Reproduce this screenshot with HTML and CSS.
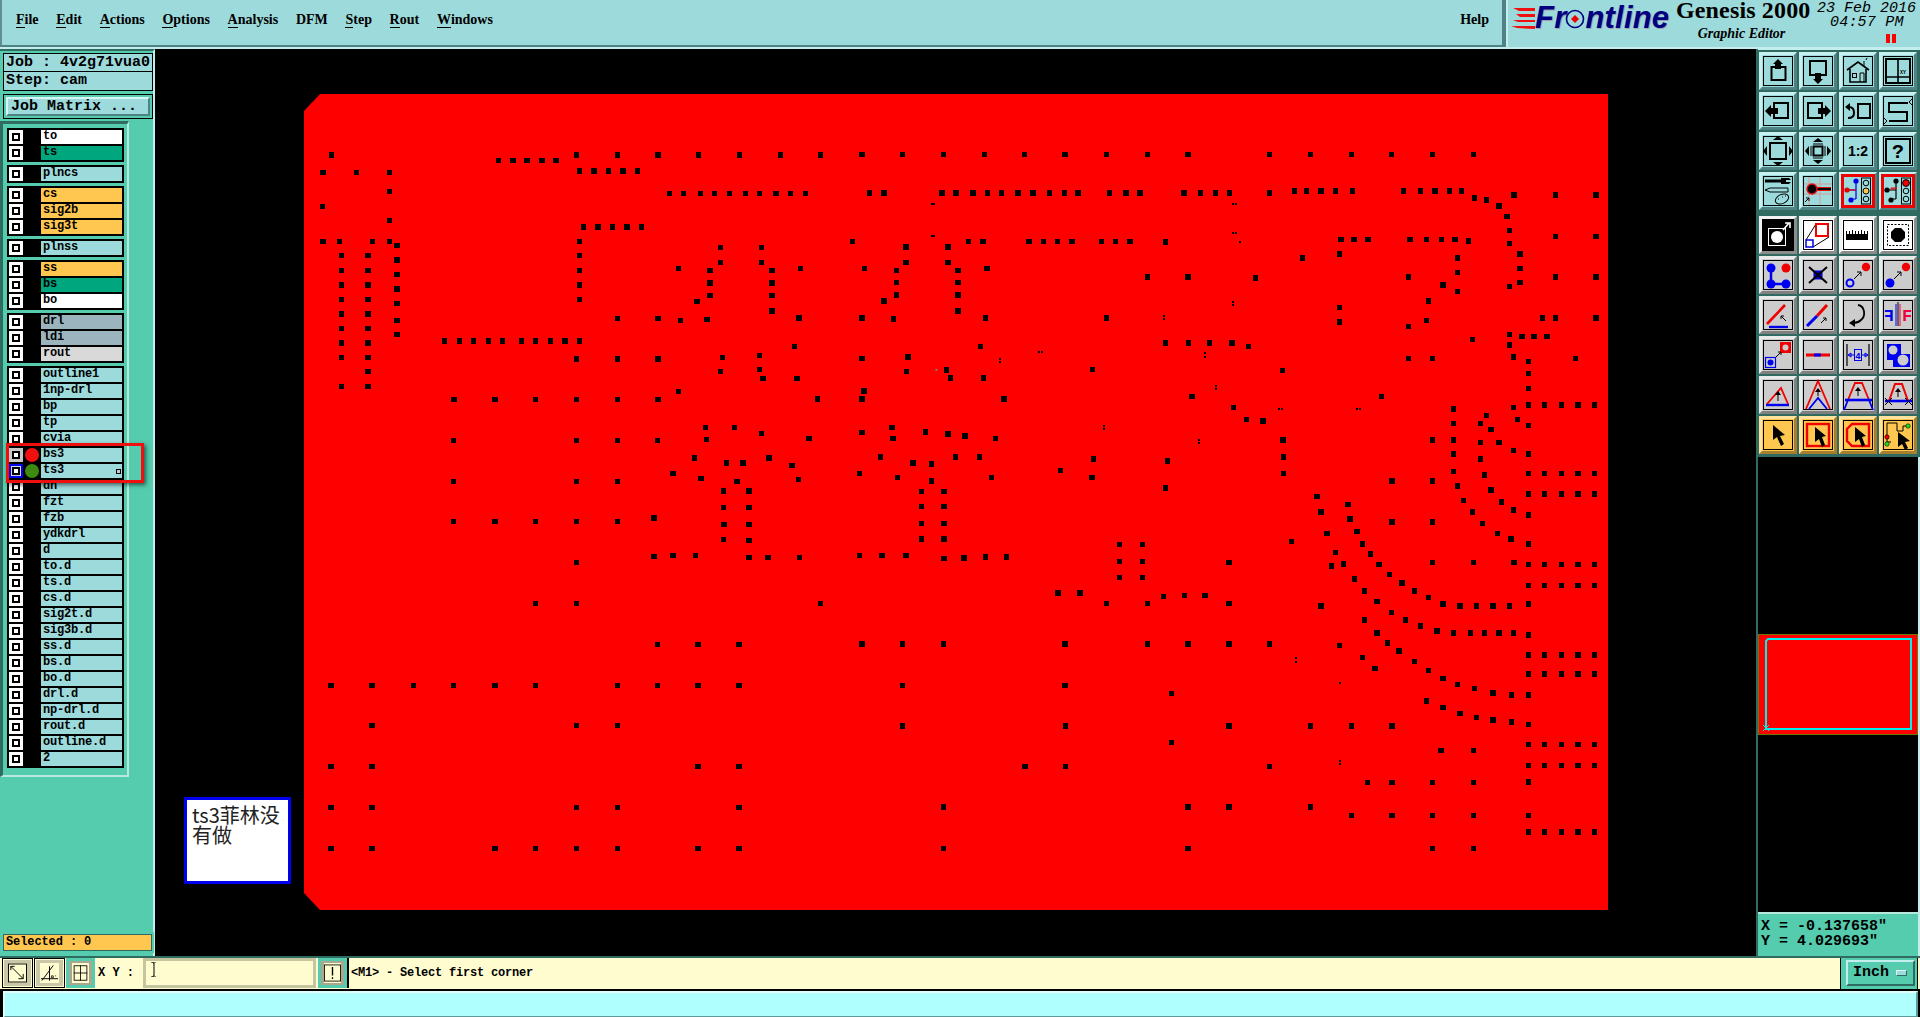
FILE: index.html
```html
<!DOCTYPE html>
<html lang="en">
<head>
<meta charset="utf-8">
<title>Genesis 2000 Graphic Editor</title>
<link rel="stylesheet" href="styles.css">
</head>
<body>
<header class="top">
  <nav class="menu">
    <span class="m"><u>F</u>ile</span><span class="m"><u>E</u>dit</span><span class="m"><u>A</u>ctions</span><span class="m"><u>O</u>ptions</span><span class="m"><u>A</u>nalysis</span><span class="m">DFM</span><span class="m"><u>S</u>tep</span><span class="m"><u>R</u>out</span><span class="m"><u>W</u>indows</span>
    <span class="m help">Help</span>
  </nav>
  <div class="brand">
    <div class="logo">
      <svg class="speed" viewBox="0 0 24 24" width="24" height="24"><path d="M2 2H24V5L8 5zM5 8H24V11L9 11zM2 14H24V16L7 16zM0 20H24V23L6 22z" fill="#f01010"/></svg>
      <span class="fl">Fr</span><svg class="oh" viewBox="0 0 20 20" width="20" height="22"><circle cx="10" cy="10" r="8.5" fill="none" stroke="#000080" stroke-width="1.6"/><path d="M10 6l4 4-4 4-4-4z" fill="#f00000"/></svg><span class="fl">ntline</span>
    </div>
    <div class="gen">
      <div class="gen-t">Genesis 2000</div>
      <div class="gen-s">Graphic Editor</div>
    </div>
    <div class="date">
      <div class="d1">23 Feb 2016</div>
      <div class="d2">04:57 PM</div>
      <div class="pause"><i></i><i></i></div>
    </div>
  </div>
</header>

<main class="mid">
  <aside class="left">
    <div class="job">
      <div class="jobline">Job : 4v2g71vua0</div>
      <div class="jobline">Step: cam</div>
    </div>
    <div class="matrix"><div class="matrix-b">Job Matrix ...</div></div>
    <div class="listwrap">
      <div class="list">
        <div class="grp">
          <div class="row"><i class="chk"></i><i class="sp"></i><span class="nm w">to</span></div>
          <div class="row"><i class="chk"></i><i class="sp"></i><span class="nm g">ts</span></div>
        </div>
        <div class="grp"><div class="row"><i class="chk"></i><i class="sp"></i><span class="nm">plncs</span></div></div>
        <div class="grp">
          <div class="row"><i class="chk"></i><i class="sp"></i><span class="nm o">cs</span></div>
          <div class="row"><i class="chk"></i><i class="sp"></i><span class="nm o">sig2b</span></div>
          <div class="row"><i class="chk"></i><i class="sp"></i><span class="nm o">sig3t</span></div>
        </div>
        <div class="grp"><div class="row"><i class="chk"></i><i class="sp"></i><span class="nm">plnss</span></div></div>
        <div class="grp">
          <div class="row"><i class="chk"></i><i class="sp"></i><span class="nm o">ss</span></div>
          <div class="row"><i class="chk"></i><i class="sp"></i><span class="nm g">bs</span></div>
          <div class="row"><i class="chk"></i><i class="sp"></i><span class="nm w">bo</span></div>
        </div>
        <div class="grp">
          <div class="row"><i class="chk"></i><i class="sp"></i><span class="nm b">drl</span></div>
          <div class="row"><i class="chk"></i><i class="sp"></i><span class="nm b">ldi</span></div>
          <div class="row"><i class="chk"></i><i class="sp"></i><span class="nm l">rout</span></div>
        </div>
        <div class="grp">
          <div class="row"><i class="chk"></i><i class="sp"></i><span class="nm">outline1</span></div>
          <div class="row"><i class="chk"></i><i class="sp"></i><span class="nm">1np-drl</span></div>
          <div class="row"><i class="chk"></i><i class="sp"></i><span class="nm">bp</span></div>
          <div class="row"><i class="chk"></i><i class="sp"></i><span class="nm">tp</span></div>
          <div class="row"><i class="chk"></i><i class="sp"></i><span class="nm">cvia</span></div>
          <div class="row"><i class="chk dim"></i><i class="sp"><b class="led red"></b></i><span class="nm">bs3</span></div>
          <div class="row"><i class="chk dim act"></i><i class="sp"><b class="led grn"></b></i><span class="nm">ts3<em class="mini"></em></span></div>
          <div class="row"><i class="chk"></i><i class="sp"></i><span class="nm">dh</span></div>
          <div class="row"><i class="chk"></i><i class="sp"></i><span class="nm">fzt</span></div>
          <div class="row"><i class="chk"></i><i class="sp"></i><span class="nm">fzb</span></div>
          <div class="row"><i class="chk"></i><i class="sp"></i><span class="nm">ydkdrl</span></div>
          <div class="row"><i class="chk"></i><i class="sp"></i><span class="nm">d</span></div>
          <div class="row"><i class="chk"></i><i class="sp"></i><span class="nm">to.d</span></div>
          <div class="row"><i class="chk"></i><i class="sp"></i><span class="nm">ts.d</span></div>
          <div class="row"><i class="chk"></i><i class="sp"></i><span class="nm">cs.d</span></div>
          <div class="row"><i class="chk"></i><i class="sp"></i><span class="nm">sig2t.d</span></div>
          <div class="row"><i class="chk"></i><i class="sp"></i><span class="nm">sig3b.d</span></div>
          <div class="row"><i class="chk"></i><i class="sp"></i><span class="nm">ss.d</span></div>
          <div class="row"><i class="chk"></i><i class="sp"></i><span class="nm">bs.d</span></div>
          <div class="row"><i class="chk"></i><i class="sp"></i><span class="nm">bo.d</span></div>
          <div class="row"><i class="chk"></i><i class="sp"></i><span class="nm">drl.d</span></div>
          <div class="row"><i class="chk"></i><i class="sp"></i><span class="nm">np-drl.d</span></div>
          <div class="row"><i class="chk"></i><i class="sp"></i><span class="nm">rout.d</span></div>
          <div class="row"><i class="chk"></i><i class="sp"></i><span class="nm">outline.d</span></div>
          <div class="row"><i class="chk"></i><i class="sp"></i><span class="nm">2</span></div>
        </div>
        <div class="callout"></div>
      </div>
    </div>
    <div class="selected"><div class="selected-in">Selected : 0</div></div>
  </aside>

  <section class="canvas">
    <svg class="board" viewBox="155 49 1602 907" width="1602" height="907">
      <path d="M320 94H1608V910H320L304 893V111Z" fill="#ff0000"/>
      <path class="dots" transform="matrix(.35714 0 0 .33333 290 80)" d="M116 225h0M802 225h0M917 225h0M1031 225h0M1144 225h0M1259 225h0M1373 225h0M1486 225h0M584 241h0M624 241h0M664 241h0M706 241h0M745 241h0M811 273h0M851 273h0M892 273h0M932 273h0M973 273h0M92 277h0M186 277h0M279 277h0M279 334h0M1063 341h0M1102 341h0M1149 341h0M1189 341h0M1231 341h0M1275 341h0M1315 341h0M1361 341h0M1401 341h0M1443 341h0M91 379h0M279 421h0M822 441h0M862 441h0M903 441h0M943 441h0M984 441h0M92 484h0M139 484h0M231 484h0M279 484h0M811 484h0M299 497h0M1205 502h0M1320 502h0M144 527h0M218 527h0M811 527h0M299 540h0M1205 547h0M1320 547h0M1088 566h0M1429 566h0M144 571h0M218 571h0M811 571h0M1176 571h0M1349 571h0M299 583h0M1176 609h0M1349 609h0M144 615h0M218 615h0M811 615h0M299 627h0M1176 646h0M1349 646h0M144 658h0M218 658h0M811 658h0M1140 664h0M299 671h0M1349 693h0M144 702h0M218 702h0M1425 714h0M917 715h0M1030 715h0M1168 718h0M299 721h0M1094 721h0M144 745h0M218 745h0M299 763h0M433 783h0M475 783h0M514 783h0M556 783h0M595 783h0M648 783h0M688 783h0M729 783h0M770 783h0M811 783h0M144 789h0M218 789h0M1413 799h0M1315 827h0M144 832h0M218 832h0M1211 832h0M802 837h0M917 837h0M1030 837h0M1315 869h0M218 875h0M1205 875h0M1325 895h0M1419 895h0M144 919h0M218 919h0M1088 934h0M1477 957h0M459 958h0M574 958h0M687 958h0M802 958h0M917 958h0M1030 958h0M1163 1043h0M1245 1043h0M1320 1061h0"/>
      <path class="dots" transform="matrix(.3954 0 0 .33333 290 430)" d="M414 31h0M724 31h0M828 31h0M930 31h0M1053 28h0M1313 25h0M1023 84h0M1211 84h0M1104 99h0M1146 99h0M1270 106h0M969 130h0M1040 145h0M1286 148h0M414 154h0M724 154h0M828 154h0M1130 154h0M1096 183h0M1161 183h0M1096 232h0M1161 233h0M921 264h0M414 275h0M518 275h0M621 275h0M724 275h0M828 275h0M1098 283h0M1161 283h0M1096 328h0M1161 332h0M969 376h0M1025 376h0M920 379h0M1161 382h0M1209 382h0M1288 382h0M724 397h0M621 520h0M724 520h0M1342 520h0M930 643h0M1032 643h0M1136 643h0M104 766h0M208 766h0M312 766h0M414 766h0M518 766h0M621 766h0M828 766h0M930 766h0M1032 766h0M1136 766h0M208 887h0M724 887h0M828 887h0M104 1009h0M208 1009h0M1032 1009h0M1136 1009h0M104 1132h0M208 1132h0M724 1132h0M828 1132h0M1136 1132h0M104 1255h0M208 1255h0M518 1255h0M621 1255h0M724 1255h0M828 1255h0M1032 1255h0M1136 1255h0"/>
      <path class="dots" transform="matrix(.4911 0 0 .5294 850 85)" d="M24 131h0M107 131h0M190 131h0M274 131h0M355 131h0M438 131h0M522 131h0M606 131h0M688 131h0M854 131h0M938 131h0M1021 131h0M1103 131h0M1186 131h0M1270 131h0M905 200h0M930 200h0M959 200h0M989 200h0M1023 200h0M1127 200h0M1162 200h0M1191 200h0M1221 200h0M1245 200h0M40 204h0M69 204h0M187 204h0M216 204h0M250 204h0M280 204h0M309 204h0M342 204h0M373 204h0M406 204h0M437 204h0M464 204h0M528 204h0M562 204h0M591 204h0M680 204h0M714 204h0M744 204h0M773 204h0M854 204h0M1352 208h0M1437 208h0M1519 208h0M1272 213h0M1296 217h0M1322 229h0M1338 248h0M1343 275h0M1343 299h0M5 296h0M241 296h0M271 296h0M364 296h0M394 296h0M423 296h0M452 296h0M512 296h0M541 296h0M570 296h0M642 297h0M1000 292h0M1026 292h0M1055 292h0M1140 292h0M1174 292h0M1204 292h0M1232 292h0M1259 295h0M1437 286h0M1519 286h0M114 306h0M200 306h0M997 319h0M1364 319h0M921 327h0M1237 327h0M114 335h0M200 335h0M30 347h0M279 347h0M1364 347h0M95 350h0M220 350h0M1237 354h0M606 363h0M688 363h0M826 365h0M1137 363h0M1437 363h0M1519 363h0M95 373h0M220 373h0M1364 373h0M1208 378h0M1343 381h0M1237 390h0M95 397h0M220 397h0M69 408h0M1178 408h0M997 420h0M220 427h0M24 440h0M89 442h0M276 440h0M522 440h0M1437 440h0M1410 440h0M1519 440h0M1174 445h0M997 448h0M1137 456h0M1343 471h0M1368 475h0M1393 475h0M1419 475h0M1268 481h0M642 487h0M689 487h0M732 487h0M778 487h0M1343 491h0M266 494h0M811 494h0M118 514h0M1351 514h0M24 517h0M1137 517h0M1186 517h0M1477 517h0M1382 522h0M494 537h0M881 539h0M196 538h0M115 541h0M1382 545h0M205 553h0M272 553h0M1382 573h0M29 578h0M696 588h0M1082 588h0M24 593h0M314 593h0M1382 604h0M1414 604h0M1449 604h0M1482 604h0M1516 604h0M781 609h0M1351 609h0M1229 612h0M1296 624h0M807 632h0M1359 632h0M841 635h0M1229 639h0M1284 639h0M1382 643h0M86 647h0M1305 651h0M154 655h0M24 656h0M200 659h0M234 663h0M88 668h0M296 668h0M882 671h0M1186 671h0M1229 671h0M1284 675h0M1322 675h0M1351 690h0M1229 697h0M1382 697h0M62 703h0M215 703h0M264 703h0M883 703h0M496 706h0M1284 706h0M646 710h0M128 714h0M166 716h0M429 728h0M1229 730h0M19 734h0M883 734h0M1382 734h0M1414 734h0M1449 734h0M1482 734h0M1516 734h0M1292 737h0M97 741h0M288 741h0M493 741h0M166 748h0M1104 748h0M1186 748h0M1237 757h0M642 761h0M1305 765h0M146 768h0M191 768h0M1382 773h0M1414 773h0M1449 773h0M1482 773h0M1516 773h0M951 777h0M1249 785h0M1327 788h0M1014 792h0M146 796h0M191 796h0M1351 803h0M959 807h0M1268 807h0M1382 812h0M1018 820h0M1104 825h0M1186 825h0M146 828h0M191 828h0M1288 828h0M1032 843h0M971 847h0M1318 847h0M146 858h0M191 858h0M1346 858h0M899 862h0M1044 867h0M1382 867h0M549 868h0M596 868h0M989 883h0M1060 886h0M19 889h0M65 889h0M114 889h0M232 893h0M276 892h0M319 892h0M191 894h0M549 900h0M596 900h0M772 902h0M1186 902h0M1270 902h0M1352 902h0M1005 905h0M1077 906h0M1382 906h0M1414 906h0M1449 906h0M1482 906h0M1516 906h0M980 909h0M1099 925h0M549 930h0M596 930h0M1027 933h0M1124 941h0M1382 945h0M1414 945h0M1449 945h0M1482 945h0M1516 945h0M1048 956h0M1149 956h0M424 960h0M468 960h0M681 964h0M723 964h0M638 966h0M1178 968h0M1073 976h0M522 979h0M606 979h0M772 979h0M1208 980h0M1382 980h0M959 984h0M1242 984h0M1276 984h0M1309 984h0M1343 984h0M1103 996h0M1048 1011h0M1131 1011h0M1162 1022h0M1195 1031h0M1073 1035h0M1229 1035h0M1263 1035h0M1292 1035h0M1322 1035h0M1351 1035h0M1382 1039h0M1094 1054h0M24 1056h0M107 1056h0M190 1056h0M438 1056h0M606 1056h0M688 1056h0M772 1056h0M854 1056h0M997 1059h0M1118 1069h0M1382 1077h0M1414 1077h0M1449 1077h0M1482 1077h0M1516 1077h0M1044 1081h0M1149 1089h0M1069 1102h0M1178 1106h0M1382 1113h0M1414 1113h0M1449 1113h0M1482 1113h0M1516 1113h0M1208 1121h0M1237 1132h0M107 1134h0M438 1134h0M1272 1140h0M1309 1148h0M655 1149h0M1347 1152h0M1382 1152h0M1174 1164h0M1208 1176h0M1242 1187h0M1276 1195h0M1309 1199h0M1347 1203h0M1382 1208h0M107 1211h0M439 1211h0M772 1211h0M938 1211h0M1021 1211h0M1104 1211h0M655 1242h0M1382 1246h0M1414 1246h0M1449 1246h0M1482 1246h0M1516 1246h0M1203 1257h0M1270 1257h0M1382 1285h0M1414 1285h0M1449 1285h0M1482 1285h0M1516 1285h0M356 1287h0M439 1287h0M854 1287h0M1382 1317h0M1054 1318h0M1104 1318h0M1186 1318h0M1270 1318h0M190 1364h0M688 1364h0M772 1364h0M938 1364h0M1021 1380h0M1104 1380h0M1186 1380h0M1270 1380h0M1382 1380h0M1382 1411h0M1414 1411h0M1449 1411h0M1482 1411h0M1516 1411h0M190 1442h0M688 1442h0M1186 1442h0M1270 1442h0"/>
      <path class="dots sm" transform="matrix(.4911 0 0 .5294 850 85)" d="M166 224h0M172 224h0M780 224h0M786 224h0M166 285h0M172 285h0M780 280h0M786 280h0M795 297h0M780 409h0M780 415h0M640 436h0M640 442h0M385 505h0M391 505h0M723 507h0M723 513h0M305 518h0M305 524h0M745 569h0M745 574h0M873 612h0M879 612h0M1032 612h0M1038 612h0M517 644h0M517 650h0M710 671h0M710 677h0M908 1083h0M908 1089h0M998 1130h0M997 1276h0M997 1282h0"/>
      <path d="M174 538h4" stroke="#30e0c0" stroke-width="1" transform="matrix(.4911 0 0 .5294 850 85)" vector-effect="non-scaling-stroke"/>
    </svg>
    <div class="note">ts3菲林没有做</div>
  </section>

  <aside class="right">
    <div class="tools">
      <div class="btn te"><svg class="ic" viewBox="0 0 32 32"><rect class="fr" x="1.5" y="1.5" width="29" height="29"/><rect x="9.5" y="12" width="14" height="13"/><path class="f" d="M16 4l5 5h-2v5h-6V9h-2z"/></svg></div>
      <div class="btn te"><svg class="ic" viewBox="0 0 32 32"><rect class="fr" x="1.5" y="1.5" width="29" height="29"/><rect x="8" y="6" width="16" height="14"/><path class="f" d="M16 29l-5-5h2v-6h6v6h2z"/></svg></div>
      <div class="btn te"><svg class="ic" viewBox="0 0 32 32"><rect class="fr" x="1.5" y="1.5" width="29" height="29"/><path d="M5 15L16 7L27 15M8 14V27H24V14" stroke-width="1.6"/><path d="M22 11V6M24 5l1-2" stroke-width="1"/><rect x="10.5" y="18.5" width="4" height="4" stroke-width="1"/><path d="M18 27V18H22V27" stroke-width="1"/></svg></div>
      <div class="btn te"><svg class="ic" viewBox="0 0 32 32"><rect class="fr" x="1.5" y="1.5" width="29" height="29"/><rect x="4" y="4" width="24" height="24"/><path d="M16 4V28M4 22H28" stroke-width="1.6"/><text class="t5" x="18" y="19">XY</text></svg></div>

      <div class="btn te"><svg class="ic" viewBox="0 0 32 32"><rect class="fr" x="1.5" y="1.5" width="29" height="29"/><rect x="12" y="8" width="14" height="15"/><path class="f" d="M3 16l6-6v3h7v6H9v3z"/></svg></div>
      <div class="btn te"><svg class="ic" viewBox="0 0 32 32"><rect class="fr" x="1.5" y="1.5" width="29" height="29"/><rect x="6" y="8" width="14" height="15"/><path class="f" d="M29 16l-6-6v3h-7v6h7v3z"/></svg></div>
      <div class="btn te"><svg class="ic" viewBox="0 0 32 32"><rect class="fr" x="1.5" y="1.5" width="29" height="29"/><rect x="16" y="9" width="12" height="14"/><path d="M7 12c4 0 5 3 5 6s-2 5-6 5"/><path class="f" d="M3 12l5-4v8z"/></svg></div>
      <div class="btn te"><svg class="ic" viewBox="0 0 32 32"><rect class="fr" x="1.5" y="1.5" width="29" height="29"/><path d="M26 8H7V17H25V26H7"/><path d="M30 4l-3 3 3 3M2 23l3 3-3 3" stroke-width="1"/></svg></div>

      <div class="btn te"><svg class="ic" viewBox="0 0 32 32"><rect class="fr" x="1.5" y="1.5" width="29" height="29"/><rect x="8" y="8" width="16" height="16"/><path class="f" d="M16 1l5 4H11zM16 31l5-4H11zM1 16l4-5v10zM31 16l-4-5v10z"/></svg></div>
      <div class="btn te"><svg class="ic" viewBox="0 0 32 32"><rect class="fr" x="1.5" y="1.5" width="29" height="29"/><rect x="11.5" y="11.5" width="9" height="9"/><path class="f" d="M16 3l5 4H11zM16 29l5-4H11zM3 16l4-5v10zM29 16l-4-5v10z"/><path d="M11 9H21M11 23H21M9 11V21M23 11V21" stroke-width="1"/></svg></div>
      <div class="btn te"><svg class="ic" viewBox="0 0 32 32"><rect class="fr" x="1.5" y="1.5" width="29" height="29"/><text class="tb" x="16" y="21">1:2</text></svg></div>
      <div class="btn te"><svg class="ic" viewBox="0 0 32 32"><rect class="fr" x="1.5" y="1.5" width="29" height="29"/><rect x="4" y="4" width="24" height="24"/><text class="tq" x="16" y="23">?</text></svg></div>

      <div class="btn te"><svg class="ic" viewBox="0 0 32 32"><rect class="fr" x="1.5" y="1.5" width="29" height="29"/><path d="M3 6H20" stroke-width="3"/><path class="f" d="M19 3h8l2 2h-5v2h5l-2 2h-8z"/><path d="M3 15L8 13H26V17H8Z" stroke-width="1"/><ellipse cx="20" cy="24" rx="7" ry="4.5" transform="rotate(-25 20 24)" stroke-width="1"/><path d="M16 24h1M20 22h1M23 21h1" stroke-width="1"/></svg></div>
      <div class="btn te"><svg class="ic" viewBox="0 0 32 32"><rect class="fr" x="1.5" y="1.5" width="29" height="29"/><path d="M7 2V30M18 2V30M2 9H30M2 19H30" stroke="#d89a9a" stroke-width="1"/><path d="M12 14H29" stroke="#e01010" stroke-width="4"/><path d="M12 14H29" stroke-width="2"/><circle cx="10" cy="14" r="5" fill="#000" stroke="#e01010" stroke-width="1.5"/><path d="M3 27l4-4M4 23h3v3" stroke-width="1"/></svg></div>
      <div class="btn te"><svg class="ic" viewBox="0 0 32 32"><rect x="0.5" y="0.5" width="31" height="31" stroke="#f00000" stroke-width="3"/><rect x="19.5" y="3" width="9" height="26" stroke-width="1"/><circle cx="24" cy="8" r="2.8" stroke-width="1"/><circle cx="24" cy="16" r="3" fill="#ffc74f" stroke-width="1"/><circle cx="24" cy="24" r="2.8" stroke-width="1"/><path d="M14 6V24M5 15H14M14 24H9" stroke="#0000e0" stroke-width="1.2"/><path d="M5 15H14" stroke="#e00000" stroke-width="1.2"/><circle cx="14" cy="6" r="2.6" fill="#0000e0" stroke="none"/><circle cx="5" cy="15" r="2.6" fill="#e00000" stroke="none"/><circle cx="9" cy="25" r="2.6" fill="#0000e0" stroke="none"/></svg></div>
      <div class="btn te"><svg class="ic" viewBox="0 0 32 32"><rect x="0.5" y="0.5" width="31" height="31" stroke="#f00000" stroke-width="3"/><rect x="19.5" y="3" width="9" height="26" stroke-width="1"/><circle cx="24" cy="8" r="3.4" fill="#f00000" stroke-width="1"/><circle cx="24" cy="16" r="2.8" stroke-width="1"/><circle cx="24" cy="24" r="2.8" stroke-width="1"/><path d="M14 6V24M5 15H14M14 24H9" stroke-width="1.2"/><path d="M8 14H14M10 12v2M12 12v2M14 12v2" stroke="#e00000" stroke-width="1"/><circle cx="14" cy="6" r="2.6" fill="#000" stroke="none"/><circle cx="5" cy="15" r="2.6" fill="#000" stroke="none"/><circle cx="9" cy="25" r="2.6" fill="#000" stroke="none"/></svg></div>

      <div class="sep"></div>

      <div class="btn wh"><svg class="ic" viewBox="0 0 32 32"><rect x="1" y="1" width="30" height="30" fill="#000" stroke="#000"/><rect x="6.5" y="9.5" width="17" height="17" stroke="#fff" stroke-width="1"/><circle cx="15" cy="18" r="6" fill="#fff" stroke="none"/><path d="M21 11L27 4M23 4h5v5" stroke="#fff" stroke-width="1.6"/></svg></div>
      <div class="btn wh"><svg class="ic" viewBox="0 0 32 32"><rect class="fr" x="1.5" y="1.5" width="29" height="29"/><path d="M4 21L14 5M11 28L27 18" stroke-width="1"/><rect x="14" y="5" width="12" height="12" stroke="#f00000"/><rect x="4" y="21" width="7" height="7" stroke="#0000e0" stroke-width="1.5"/></svg></div>
      <div class="btn wh"><svg class="ic" viewBox="0 0 32 32"><rect class="fr" x="1.5" y="1.5" width="29" height="29"/><path class="f" d="M4 12h1v3h2v-3h1v3h2v-4h1v4h2v-3h1v3h2v-3h1v3h2v-4h1v4h2v-3h1v3h2v-3h1v9H4z"/></svg></div>
      <div class="btn wh"><svg class="ic" viewBox="0 0 32 32"><rect class="fr" x="1.5" y="1.5" width="29" height="29"/><rect x="5.5" y="5.5" width="21" height="21" stroke-width="1" stroke-dasharray="2 1.5"/><path class="f" d="M13 9h6l4 4v6l-4 4h-6l-4-4v-6z"/></svg></div>

      <div class="btn gr"><svg class="ic" viewBox="0 0 32 32"><rect class="fr" x="1.5" y="1.5" width="29" height="29"/><path d="M9 9V25H24" stroke="#0000f0" stroke-width="2.5"/><circle cx="9" cy="9" r="4.5" fill="#0000f0" stroke="none"/><circle cx="9" cy="25" r="4.5" fill="#0000f0" stroke="none"/><circle cx="24" cy="25" r="4.5" fill="#0000f0" stroke="none"/><circle cx="24" cy="9" r="4.5" fill="#f00000" stroke="none"/></svg></div>
      <div class="btn gr"><svg class="ic" viewBox="0 0 32 32"><rect class="fr" x="1.5" y="1.5" width="29" height="29"/><rect x="11.5" y="11.5" width="9" height="9" fill="#0000d0" stroke="none"/><path d="M7 8L25 24M25 8L7 24"/></svg></div>
      <div class="btn gr"><svg class="ic" viewBox="0 0 32 32"><rect class="fr" x="1.5" y="1.5" width="29" height="29"/><circle cx="8" cy="24" r="3.5" stroke="#0000f0"/><circle cx="24" cy="8" r="4.2" fill="#f00000" stroke="none"/><path d="M12 20L19 13M15 13h4v4" stroke-width="1"/></svg></div>
      <div class="btn gr"><svg class="ic" viewBox="0 0 32 32"><rect class="fr" x="1.5" y="1.5" width="29" height="29"/><circle cx="8" cy="24" r="4.5" fill="#0000f0" stroke="none"/><circle cx="24" cy="8" r="4.2" fill="#f00000" stroke="none"/><path d="M12 20L19 13M15 13h4v4" stroke-width="1"/></svg></div>

      <div class="btn gr"><svg class="ic" viewBox="0 0 32 32"><rect class="fr" x="1.5" y="1.5" width="29" height="29"/><path d="M5 25L23 6" stroke="#f00000" stroke-width="2.6"/><path d="M7 28H26" stroke="#0000f0" stroke-width="2.4"/><path d="M19 17l5 5M19 20v-3h3" stroke-width="1"/></svg></div>
      <div class="btn gr"><svg class="ic" viewBox="0 0 32 32"><rect class="fr" x="1.5" y="1.5" width="29" height="29"/><path d="M15 17L25 6" stroke="#f00000" stroke-width="3"/><path d="M5 27L15 17" stroke="#0000f0" stroke-width="3"/><path d="M19 24l5-5M21 19h3v3" stroke-width="1"/></svg></div>
      <div class="btn gr"><svg class="ic" viewBox="0 0 32 32"><rect class="fr" x="1.5" y="1.5" width="29" height="29"/><path d="M16 6c7 1 8 11 3 15-2 2-4 3-8 3" stroke-width="1.8"/><path class="f" d="M7 24l6-4v8z"/></svg></div>
      <div class="btn gr"><svg class="ic" viewBox="0 0 32 32"><rect class="fr" x="1.5" y="1.5" width="29" height="29"/><path d="M16 3V27" stroke-width="1"/><path d="M14 5V27" stroke="#0000f0" stroke-width="1"/><path d="M18 5V27" stroke="#f00040" stroke-width="1"/><text class="tfr" x="20" y="22">F</text><text class="tfb" x="-12" y="22" transform="scale(-1 1)">F</text></svg></div>

      <div class="btn gr"><svg class="ic" viewBox="0 0 32 32"><rect class="fr" x="1.5" y="1.5" width="29" height="29"/><rect x="18" y="3" width="11" height="11" fill="#f00000" stroke="none"/><circle cx="23.5" cy="8.5" r="3" fill="#ccc" stroke="none"/><rect x="3.5" y="18.5" width="10" height="10" stroke="#0000f0" stroke-width="1.2"/><circle cx="8.5" cy="23.5" r="3" fill="#0000f0" stroke="none"/><path d="M14 18L19 13M16 13h3v3" stroke-width="1"/></svg></div>
      <div class="btn gr"><svg class="ic" viewBox="0 0 32 32"><rect class="fr" x="1.5" y="1.5" width="29" height="29"/><path d="M4 16H28" stroke="#f00000" stroke-width="3"/><path d="M12 16H19" stroke="#0000f0" stroke-width="3"/></svg></div>
      <div class="btn gr"><svg class="ic" viewBox="0 0 32 32"><rect class="fr" x="1.5" y="1.5" width="29" height="29"/><path d="M5 5V27M27 5V27" stroke-width="1.2"/><path d="M6 16H26M6 16l3-2v4zM26 16l-3-2v4z" stroke="#0000f0" stroke-width="1"/><rect x="12.5" y="10.5" width="7" height="11" fill="#ccc" stroke="#0000f0" stroke-width="1"/><text class="t4" x="16" y="19.5">4</text></svg></div>
      <div class="btn gr"><svg class="ic" viewBox="0 0 32 32"><rect class="fr" x="1.5" y="1.5" width="29" height="29"/><path d="M5 5H19V15H28V28H11V21H5Z" fill="#0000f0" stroke="none"/><circle cx="11" cy="11" r="4.5" fill="#ccc" stroke="none"/><circle cx="21" cy="21" r="5.5" fill="#ccc" stroke="none"/></svg></div>

      <div class="btn gr"><svg class="ic" viewBox="0 0 32 32"><rect class="fr" x="1.5" y="1.5" width="29" height="29"/><path d="M5 25L19 9L26 25" stroke="#f00000" stroke-width="1.8"/><path d="M4 26H27" stroke="#0000f0" stroke-width="2.4"/><path d="M16 22V14" stroke-width="1"/><path class="f" d="M16 12l3 4h-6z"/></svg></div>
      <div class="btn gr"><svg class="ic" viewBox="0 0 32 32"><rect class="fr" x="1.5" y="1.5" width="29" height="29"/><path d="M4 30L16 2L28 30" stroke="#f00000" stroke-width="1.8"/><path d="M7 30L16 19L25 30" stroke="#0000f0" stroke-width="1.8"/><path d="M16 17V11" stroke-width="1"/><path class="f" d="M16 9l3 4h-6z"/></svg></div>
      <div class="btn gr"><svg class="ic" viewBox="0 0 32 32"><rect class="fr" x="1.5" y="1.5" width="29" height="29"/><path d="M6 21L13 4H20L27 21" stroke="#f00000" stroke-width="1.8"/><path d="M3 21H30" stroke="#0000f0" stroke-width="2.6"/><path d="M6 21L2 31M27 21L31 31" stroke="#0000f0" stroke-width="1.8"/><path d="M16 17V11" stroke-width="1"/><path class="f" d="M16 8l3 4h-6z"/></svg></div>
      <div class="btn gr"><svg class="ic" viewBox="0 0 32 32"><rect class="fr" x="1.5" y="1.5" width="29" height="29"/><path d="M7 22L13 5H20L26 22" stroke="#f00000" stroke-width="2"/><path d="M3 22H30" stroke="#0000f0" stroke-width="2.6"/><path d="M3 19l7 7M10 19l-7 7M23 19l7 7M30 19l-7 7" stroke-width="1"/><path d="M16 18V12" stroke-width="1"/><path class="f" d="M16 9l3 4h-6z"/></svg></div>

      <div class="btn or"><svg class="ic" viewBox="0 0 32 32"><rect class="fr" x="1.5" y="1.5" width="29" height="29"/><path class="f" d="M11 6V21L15 18L19 27L22 25L18 17L23 16Z"/></svg></div>
      <div class="btn or"><svg class="ic" viewBox="0 0 32 32"><rect class="fr" x="1.5" y="1.5" width="29" height="29"/><rect x="5" y="5" width="22" height="22" stroke="#f00000" stroke-width="2.4"/><path class="f" d="M13 8V23L17 20L20 28L23 26L20 18L24 17Z"/></svg></div>
      <div class="btn or"><svg class="ic" viewBox="0 0 32 32"><rect class="fr" x="1.5" y="1.5" width="29" height="29"/><path d="M10 5H27V27H10L5 22V10Z" stroke="#f00000" stroke-width="2.4"/><path class="f" d="M13 8V23L17 20L20 28L23 26L20 18L24 17Z"/></svg></div>
      <div class="btn or"><svg class="ic" viewBox="0 0 32 32"><rect class="fr" x="1.5" y="1.5" width="29" height="29"/><path d="M5 18V4H15V12H21V7H26M5 18V23H9" stroke-width="1"/><circle cx="5" cy="18" r="2.2" fill="#f00000" stroke-width=".6"/><circle cx="5" cy="25" r="2.2" fill="#20e020" stroke-width=".6"/><circle cx="26" cy="7" r="2.2" fill="#20e020" stroke-width=".6"/><path class="f" d="M16 13V28L20 25L23 31L26 29L23 23L28 22Z"/></svg></div>
    </div>
    <div class="viewer">
      <div class="over">
        <svg viewBox="0 0 160 101" width="160" height="101"><path d="M10 5H153V95H8V7Z" fill="none" stroke="#00eeee" stroke-width="2"/><path d="M5 91l6 6M11 91l-6 6" stroke="#00eeee" stroke-width="1"/></svg>
      </div>
    </div>
    <div class="coords">X = -0.137658"<br>Y = 4.029693"</div>
  </aside>
</main>

<div class="cmd">
  <div class="cbtn"><svg class="cic" viewBox="0 0 20 20"><rect x=".5" y=".5" width="19" height="19"/><path d="M3 3L16 16M11 16h5v-5M3 7V3h4"/></svg></div>
  <div class="cbtn"><svg class="cic" viewBox="0 0 20 20"><rect x=".5" y=".5" width="19" height="19" stroke="none"/><path d="M2 18L14 2M1 16H19M10 3V18"/><path d="M12 13h2v2h-2zM16 13h1" stroke-width=".8"/></svg></div>
  <div class="cbtn act"><svg class="cic" viewBox="0 0 20 20"><rect x="2.5" y="1.5" width="15" height="17"/><path d="M10 1V19M2 10H18"/></svg></div>
  <div class="xy">X Y :</div>
  <div class="inp"><svg class="beam" viewBox="0 0 7 15" width="7" height="15"><path d="M1 0h2v1h1v13h-1v1H1M6 0H4M6 15H4" fill="none" stroke="#000" stroke-width="1"/></svg></div>
  <div class="cbtn act wide"><svg class="cic" viewBox="0 0 20 20"><rect x=".5" y=".5" width="19" height="19"/><path d="M10 3V13M10 15V17" stroke-width="1.6"/></svg></div>
  <div class="msg">&lt;M1&gt; - Select first corner</div>
  <div class="unit"><div class="unit-b">Inch<i class="dash"></i></div></div>
</div>
<div class="status"></div>
</body>
</html>
```

FILE: styles.css
```css
* { box-sizing: border-box; }
html, body { margin: 0; height: 100%; overflow: hidden; }
body {
  width: 1920px; height: 1017px; background: #000;
  display: grid; grid-template-rows: 49px 907px 33px 28px;
  font-family: "Liberation Mono", monospace; font-weight: 700; color: #000;
}

/* top bar */
.top { display: flex; background: #c4eeee; padding-bottom: 2px; }
.menu {
  width: 1506px; height: 47px; background: #9cdadb; display: flex; align-items: center; gap: 17.7px;
  padding: 0 13px 6px 14px; border-left: 2px solid #5f8f8f; border-right: 4px solid #4f8285; border-bottom: 2px solid #4f8285;
  font: 700 14px/18px "Liberation Serif", serif;
}
.m u { text-decoration: none; border-bottom: 1px solid #000; display: inline-block; line-height: 15px; height: 16px; }
.help { margin-left: auto; }
.brand { flex: 1; margin-left: 2px; background: #9cdadb; position: relative; display: flex; height: 47px; overflow: hidden; }
.logo { position: absolute; left: 3px; top: 3px; display: flex; align-items: center; height: 30px; color: #000080; }
.speed { margin-right: 0; }
.fl { font: italic 700 31px/30px "Liberation Sans", sans-serif; text-shadow: 1px 1px 0 #a0a0b0; letter-spacing: .2px; }
.oh { margin: 2px 0 0 -1px; }
.gen { position: absolute; left: 168px; top: -3px; text-align: center; width: 134px; }
.gen-t { font: 700 24px/27px "Liberation Serif", serif; white-space: nowrap; letter-spacing: .15px; }
.gen-s { font: italic 700 14px/18px "Liberation Serif", serif; margin-top: 1px; margin-right: 3px; }
.date { position: absolute; left: 309px; top: 0; width: 100px; font-style: italic; font-weight: 400; font-size: 15px; line-height: 17px; }
.d1 { white-space: pre; }
.d2 { margin-left: 13px; margin-top: -3px; white-space: pre; letter-spacing: .2px; }
.pause { display: flex; gap: 2px; margin: 3px 0 0 69px; }
.pause i { width: 4px; height: 9px; background: #f00; }

/* middle */
.mid { display: flex; min-height: 0; }
.left { width: 155px; background: #54ccad; display: flex; flex-direction: column; border-right: 2px solid #c4eeee; border-top: 2px solid #2f6b60; padding-top: 2px; }
.job { margin: 0 0 0 3px; width: 150px; }
.jobline { height: 19px; border: 1px solid #000; background: #9cdadb; font-size: 15px; line-height: 17px; padding-left: 2px; white-space: pre; margin-bottom: -1px; }
.jobline + .jobline { height: 20px; margin-bottom: 0; }
.matrix { margin: 3px 0 0 3px; width: 150px; height: 25px; border: 1px solid #000; padding: 2px; }
.matrix-b { height: 19px; background: #9cdadb; font-size: 15px; line-height: 15px; padding-left: 3px; border: 2px solid; border-color: #d8f5f5 #4f8285 #4f8285 #d8f5f5; white-space: pre; }
.listwrap { margin-top: 2px; height: 656px; width: 129px; background: #54ccad; border-top: 3px solid #2f6b60; border-left: 3px solid #2f6b60; border-right: 2px solid #b8e8dc; border-bottom: 2px solid #b8e8dc; padding: 4px 0 0 4px; }
.list { display: flex; flex-direction: column; gap: 3px; position: relative; width: 117px; }
.grp { background: #000; padding: 2px 2px 0; width: 117px; }
.row { display: flex; height: 14px; margin-bottom: 2px; }
.chk { width: 14px; height: 14px; background: #fff; padding: 3px; flex: none; display: block; }
.chk::before { content: ""; display: block; box-sizing: border-box; width: 8px; height: 8px; border: 2px solid #000; background: #fff; }
.chk.dim { background: #c8c8c8; }
.chk.act { background: #d8d8d8; outline: 2px solid #0000f0; outline-offset: -2px; }
.sp { width: 18px; display: flex; justify-content: center; align-items: center; flex: none; }
.led { width: 14px; height: 14px; border-radius: 50%; display: block; }
.red { background: #f01010; }
.grn { background: #3c8a10; }
.nm { flex: 1; background: #9cdadb; font-size: 12px; line-height: 13px; padding-left: 2px; letter-spacing: -.2px; position: relative; }
.w { background: #fff; }
.g { background: #00a67d; }
.o { background: #ffc74f; }
.b { background: #9bb4bd; }
.l { background: #d9d9d9; }
.mini { position: absolute; right: 1px; top: 5px; width: 5px; height: 5px; border: 1px solid #000; background: #c8c8c8; }
.callout { position: absolute; left: -1px; top: 315px; width: 138px; height: 40px; border: 3px solid #ee0f0f; box-shadow: 2px 2px 4px rgba(0,0,0,.55); }
.selected { margin: auto 0 3px 1px; width: 153px; height: 21px; padding: 2px; background: #54ccad; }
.selected-in { height: 17px; background: #ffc74f; border: 1px solid #2f6b60; font-size: 12px; line-height: 15px; padding-left: 2px; letter-spacing: -.1px; white-space: pre; }

.canvas { width: 1601px; position: relative; background: #000; overflow: hidden; }
.board { display: block; }
.dots { fill: none; stroke: #000; stroke-width: 5.5; stroke-linecap: square; vector-effect: non-scaling-stroke; shape-rendering: crispEdges; }
.dots.sm { stroke-width: 2; }
.note { position: absolute; left: 29px; top: 748px; width: 107px; height: 87px; background: #fff; border: 3px solid #0000f0; padding: 5px 5px; color: #222; font: 400 20px/20px "Noto Sans CJK SC", sans-serif; }

/* right tools */
.right { width: 164px; display: flex; flex-direction: column; background: #000; border-left: 2px solid #2f6b60; }
.tools { background: #2f6b60; padding: 2px 0 2px 1px; display: grid; grid-template-columns: repeat(4, 38px); column-gap: 2px; row-gap: 2px; border-top: 1px solid #c4eeee; height: 408px; align-content: start; justify-content: start; }
.sep { grid-column: 1 / -1; height: 3px; margin-bottom: -1px; background: #2f6b60; }
.btn { width: 38px; height: 38px; border: 3px solid; display: block; }
.te { background: #9cdadb; border-color: #c9f0f0 #4f8285 #4f8285 #c9f0f0; }
.wh { background: #fff; border-color: #f2f2f2 #8c8c8c #8c8c8c #f2f2f2; }
.gr { background: #ccc; border-color: #eaeaea #808080 #808080 #eaeaea; }
.or { background: #ffc74f; border-color: #ffe29d #a87e2e #a87e2e #ffe29d; }
.ic { display: block; width: 32px; height: 32px; fill: none; stroke: #000; stroke-width: 2; overflow: visible; }
.ic .fr { stroke-width: 1; shape-rendering: crispEdges; }
.ic .f { fill: #000; stroke: none; }
.ic text { font-family: "Liberation Mono", monospace; font-weight: 700; stroke: none; fill: #000; }
.t5 { font-size: 5px; }
.ic .tb { font-size: 14px; text-anchor: middle; font-family: "Liberation Sans", sans-serif; }
.ic .tq { font-size: 20px; text-anchor: middle; }
.ic .tfr { font-size: 17px; fill: #f00040; }
.ic .tfb { font-size: 17px; fill: #0000f0; }
.ic .t4 { font-size: 9px; fill: #0000f0; text-anchor: middle; }

.viewer { flex: 1; background: #000; padding-top: 177px; border-right: 2px solid #c4eeee; }
.over { width: 160px; height: 101px; background: #ff0000; outline: 1px solid #6a7a00; outline-offset: -1px; }
.over svg { display: block; }
.coords { height: 44px; background: #54ccad; border-top: 2px solid #b8e8dc; border-right: 2px solid #c4eeee; padding: 5px 0 0 3px; font-size: 15px; line-height: 15px; white-space: pre; }

/* command row */
.cmd { display: flex; background: #fffdd0; border-top: 2px solid #2f6b60; height: 33px; padding: 0 2px 1px 2px; }
.cbtn { width: 31px; height: 30px; margin-right: 1px; border: 2px solid #fffdd0; outline: 1px solid #000; outline-offset: -1px; background: #c8c8a8; padding: 3px 4px; flex: none; }
.cbtn.act { border: 3px solid #54ccad; outline: 0; padding: 2px 3px; margin: 0; background: #a8a890; width: 29px; }
.cic { display: block; width: 100%; height: 100%; background: #fffdd0; fill: none; stroke: #000; stroke-width: 1; }
.xy { width: 48px; flex: none; font-size: 12px; line-height: 30px; padding-left: 3px; white-space: pre; }
.inp { width: 173px; height: 30px; flex: none; border: 3px solid #c5c5a0; background: #fffdd0; padding: 1px 0 0 4px; margin-right: 2px; }
.beam { display: block; }
.wide { width: 28px; }
.msg { flex: 1; border-left: 2px solid #000; font-size: 12px; line-height: 30px; padding-left: 2px; letter-spacing: -.2px; white-space: pre; }
.unit { width: 78px; flex: none; height: 31px; background: #54ccad; border-left: 1px solid #000; border-right: 1px solid #000; padding: 2px 2px 3px 5px; }
.unit-b { height: 26px; border: 2px solid; border-color: #c4eeee #2f6b60 #2f6b60 #c4eeee; font: 700 15px/22px "Liberation Mono", monospace; padding: 0 6px 0 5px; display: flex; align-items: center; justify-content: space-between; }
.dash { width: 11px; height: 6px; border: 1px solid; border-color: #e0f5f5 #2f6b60 #2f6b60 #e0f5f5; background: #9cdadb; }

.status { background: #b0ffff; margin: 2px 2px 0 3px; border: 2px solid; border-color: #dfffff #5f9a9a #5f9a9a #dfffff; height: 27px; }
```
